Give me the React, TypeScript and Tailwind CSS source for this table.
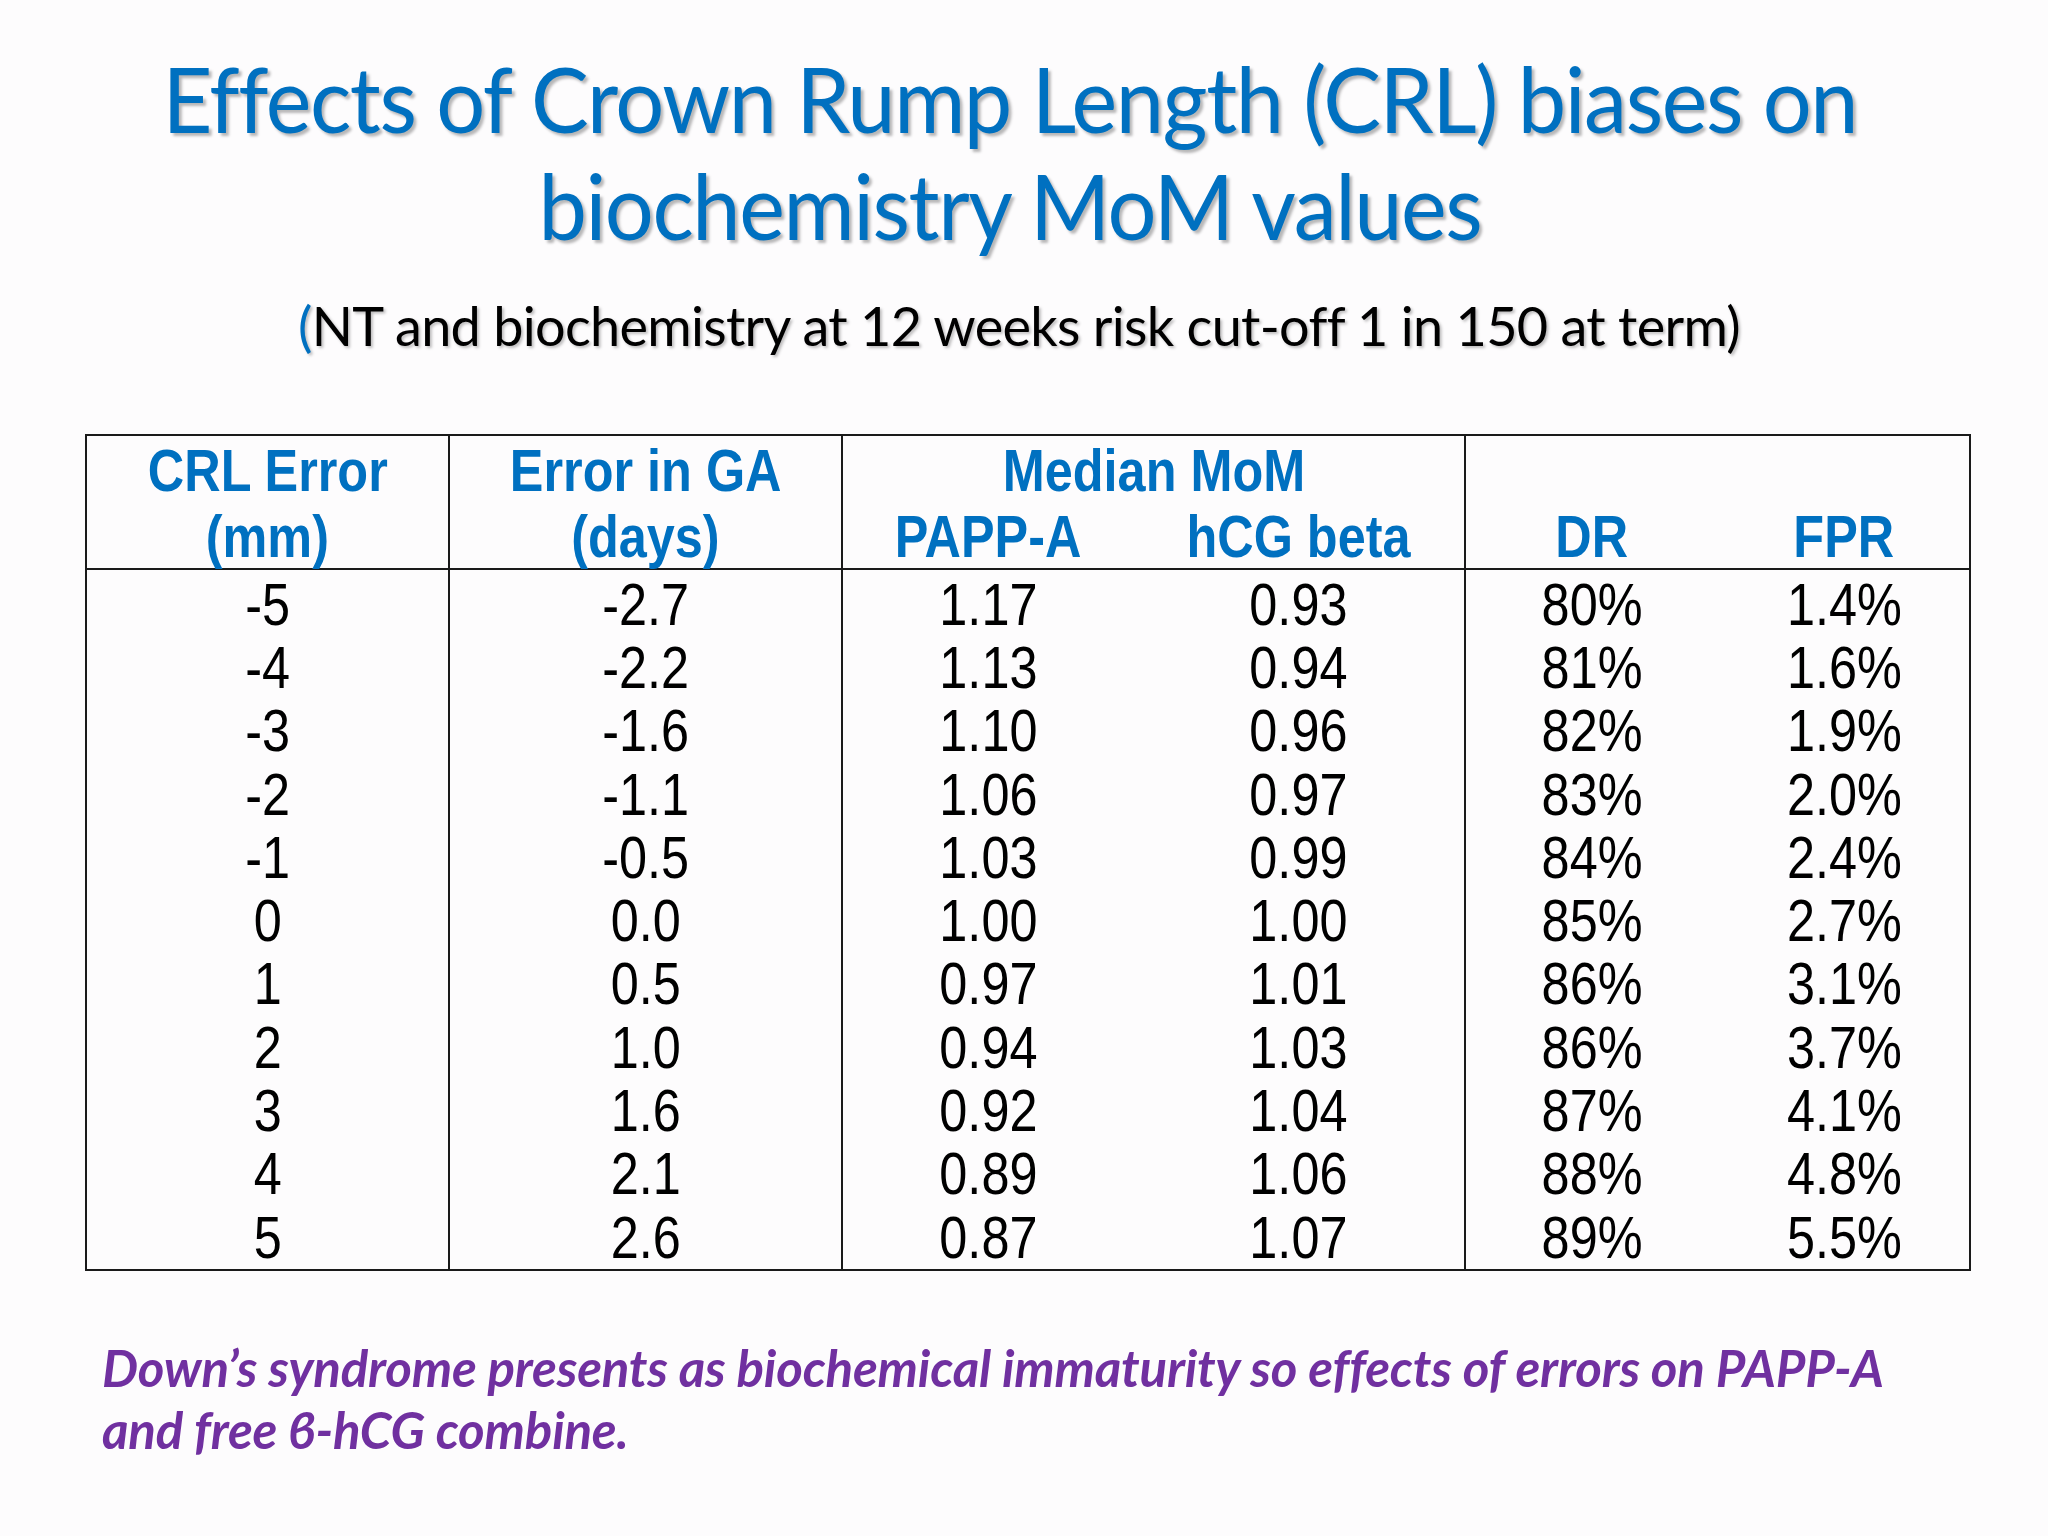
const rows: string[][] = [
  ["-5", "-2.7", "1.17", "0.93", "80%", "1.4%"],
  ["-4", "-2.2", "1.13", "0.94", "81%", "1.6%"],
  ["-3", "-1.6", "1.10", "0.96", "82%", "1.9%"],
  ["-2", "-1.1", "1.06", "0.97", "83%", "2.0%"],
  ["-1", "-0.5", "1.03", "0.99", "84%", "2.4%"],
  ["0", "0.0", "1.00", "1.00", "85%", "2.7%"],
  ["1", "0.5", "0.97", "1.01", "86%", "3.1%"],
  ["2", "1.0", "0.94", "1.03", "86%", "3.7%"],
  ["3", "1.6", "0.92", "1.04", "87%", "4.1%"],
  ["4", "2.1", "0.89", "1.06", "88%", "4.8%"],
  ["5", "2.6", "0.87", "1.07", "89%", "5.5%"],
];

const calibri = "font-['Lato','Open_Sans',sans-serif]";

// Arial Narrow look: Liberation Sans squeezed horizontally
function N({ children }: { children: React.ReactNode }) {
  return <span className="inline-block whitespace-nowrap scale-x-[0.84]">{children}</span>;
}

function Column({ col, border }: { col: number; border: boolean }) {
  return (
    <div className={`flex flex-col pt-[3px] ${border ? "border-r-2 border-[#1a1a1a]" : ""}`}>
      {rows.map((r, i) => (
        <div key={i} className="h-[63.3px] flex items-center justify-center">
          <N>{r[col]}</N>
        </div>
      ))}
    </div>
  );
}

export default function App() {
  return (
    <div className="w-[2048px] h-[1536px] bg-[#fdfcfd] overflow-hidden flex flex-col">
      <h1
        className={`${calibri} pt-[44px] pr-[30px] text-center text-[#0070c0] text-[92px] leading-[107px] tracking-[-1.5px] scale-x-[0.94] [text-shadow:3px_3px_3px_rgba(0,0,0,0.28)]`}
      >
        Effects of Crown Rump Length (CRL) biases on
        <br />
        biochemistry MoM values
      </h1>

      <p
        className={`${calibri} mt-[33px] pr-[10px] text-center text-[54px] leading-[70px] text-black tracking-[-0.7px] [text-shadow:2px_2px_3px_rgba(0,0,0,0.25)]`}
      >
        <span className="text-[#0070c0]">(</span>NT and biochemistry at 12 weeks risk cut-off 1 in 150 at term)
      </p>

      <div className="font-['Liberation_Sans',Arial,sans-serif] ml-[85px] mt-[73px] w-[1886px] border-2 border-[#1a1a1a] text-[60px] text-black">
        <div className="grid grid-cols-[363px_393px_290px_333px_253px_1fr] h-[134px] border-b-2 border-[#1a1a1a] font-bold text-[#0070c0] leading-[66px]">
          <div className="flex flex-col items-center border-r-2 border-[#1a1a1a] pt-[2px]">
            <N>CRL Error</N>
            <N>(mm)</N>
          </div>
          <div className="flex flex-col items-center border-r-2 border-[#1a1a1a] pt-[2px]">
            <N>Error in GA</N>
            <N>(days)</N>
          </div>
          <div className="col-span-2 flex flex-col border-r-2 border-[#1a1a1a] pt-[2px]">
            <div className="text-center">
              <N>Median MoM</N>
            </div>
            <div className="grid grid-cols-[290px_1fr] text-center">
              <N>PAPP-A</N>
              <N>hCG beta</N>
            </div>
          </div>
          <div className="col-span-2 flex flex-col pt-[2px]">
            <span>&nbsp;</span>
            <div className="grid grid-cols-2 text-center">
              <N>DR</N>
              <N>FPR</N>
            </div>
          </div>
        </div>
        <div className="grid grid-cols-[363px_393px_290px_333px_253px_1fr]">
          <Column col={0} border />
          <Column col={1} border />
          <Column col={2} border={false} />
          <Column col={3} border />
          <Column col={4} border={false} />
          <Column col={5} border={false} />
        </div>
      </div>

      <p
        className={`${calibri} mt-[66px] ml-[102px] text-[#7030a0] text-[51px] leading-[62px] font-bold italic tracking-[-0.2px]`}
      >
        Down’s syndrome presents as biochemical immaturity so effects of errors on PAPP-A
        <br />
        and free ϐ-hCG combine.
      </p>
    </div>
  );
}
